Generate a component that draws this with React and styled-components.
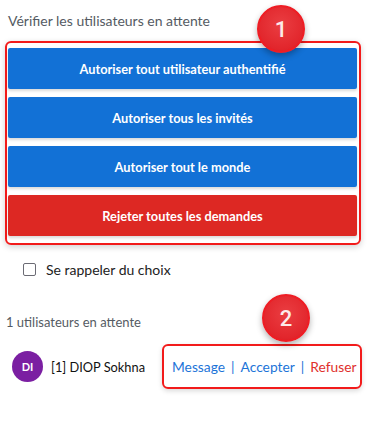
import styled, { createGlobalStyle } from "styled-components";

const Global = createGlobalStyle`
body{
  margin:0;
  background:#fff;
  font-family: Lato, "Open Sans", sans-serif;
}
`

const Page = styled.div`
width:369px;
height:441px;
position:relative;
overflow:hidden;
`

const Title = styled.div`
font-size:14px;
color:#555b63;
padding:12px 0 0 8px;
line-height:18px;
`

const Frame = styled.div`
position:relative;
margin:11px 8px 0 5px;
border:2px solid #f21b1b;
border-radius:6px;
padding:5px 2px 7px 1px;
display:flex;
flex-direction:column;
gap:8px;
box-shadow:0 2px 6px rgba(0,0,0,0.18);
`

const Button = styled.button`
height:41px;
border:none;
border-radius:2px;
background:${p => p.danger ? "#dd2823" : "#1271d6"};
color:#fff;
font-family: Lato, sans-serif;
font-weight:700;
font-size:12.8px;
box-shadow:0 2px 3px rgba(0,0,0,0.15);
cursor:pointer;
`

const Badge = styled.div`
position:absolute;
width:44px;
height:44px;
border-radius:50%;
background:radial-gradient(circle at 50% 40%, #ea3e42 0%, #e2262c 70%, #d41a20 100%);
border:2px solid #ee1d24;
color:#fdeaea;
font-family: Roboto, Arial, sans-serif;
font-size:22px;
font-weight:500;
display:flex;
align-items:center;
justify-content:center;
box-shadow:0 3px 6px rgba(0,0,0,0.3);
z-index:2;
`

const CheckRow = styled.label`
display:flex;
align-items:center;
gap:10px;
margin:16px 0 0 23px;
font-size:14px;
color:#222;
`

const Box = styled.span`
width:11px;
height:11px;
border:1.5px solid #6b6b74;
border-radius:2px;
`

const Sub = styled.div`
margin:36px 0 0 6px;
font-size:13px;
color:#555b63;
`

const UserRow = styled.div`
display:flex;
align-items:center;
margin:14px 0 0 12px;
`

const Avatar = styled.div`
width:31px;
height:31px;
border-radius:50%;
background:#7b1fa2;
color:#fff;
font-size:11px;
font-weight:700;
display:flex;
align-items:center;
justify-content:center;
`

const Name = styled.div`
margin-left:8px;
font-size:12.8px;
color:#111;
width:111px;
`

const Actions = styled.div`
box-sizing:border-box;
width:200px;
height:45px;
border:2px solid #f21b1b;
border-radius:6px;
display:flex;
align-items:center;
padding-left:8px;
box-shadow:0 2px 5px rgba(0,0,0,0.15);
font-size:13.8px;
`

const Link = styled.span`
color:${p => p.danger ? "#e0302c" : "#1c74d8"};
`

const Sep = styled.span`
color:#1c74d8;
margin:0 6px;
`

export default function App() {
  return (
    <Page>
      <Global />
      <Title>Vérifier les utilisateurs en attente</Title>
      <Frame>
        <Button>Autoriser tout utilisateur authentifié</Button>
        <Button>Autoriser tous les invités</Button>
        <Button>Autoriser tout le monde</Button>
        <Button danger>Rejeter toutes les demandes</Button>
      </Frame>
      <Badge style={{ left: 257, top: 5 }}>1</Badge>
      <CheckRow><Box />Se rappeler du choix</CheckRow>
      <Sub>1 utilisateurs en attente</Sub>
      <UserRow>
        <Avatar>DI</Avatar>
        <Name>[1] DIOP Sokhna</Name>
        <Actions>
          <Link>Message</Link><Sep>|</Sep><Link>Accepter</Link><Sep>|</Sep><Link danger>Refuser</Link>
        </Actions>
      </UserRow>
      <Badge style={{ left: 262, top: 294 }}>2</Badge>
    </Page>
  )
}
